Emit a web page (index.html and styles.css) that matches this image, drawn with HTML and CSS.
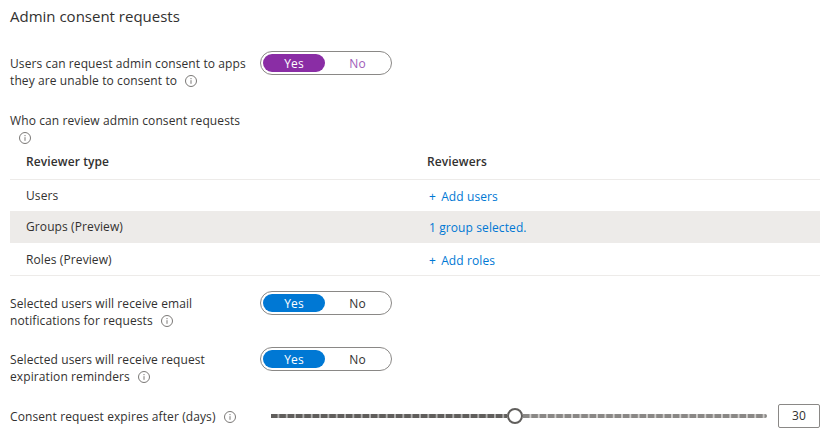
FILE: index.html
```html
<!DOCTYPE html>
<html lang="en">
<head>
<meta charset="utf-8">
<title>Admin consent requests</title>
<link rel="stylesheet" href="styles.css">
</head>
<body>
<main class="page">
  <h1 class="title">Admin consent requests</h1>

  <section class="setting first">
    <div class="label">Users can request admin consent to apps they are unable to consent to<svg class="info" viewBox="0 0 12 12"><circle cx="6" cy="6" r="5.5"/><path d="M6 5.2v3.6M6 3v1.2"/></svg></div>
    <div class="toggle purple"><span class="on">Yes</span><span class="off">No</span></div>
  </section>

  <div class="who">Who can review admin consent requests<br><svg class="info solo" viewBox="0 0 12 12"><circle cx="6" cy="6" r="5.5"/><path d="M6 5.2v3.6M6 3v1.2"/></svg></div>

  <div class="table">
    <div class="row head"><span class="c1">Reviewer type</span><span class="c2">Reviewers</span></div>
    <div class="row users"><span class="c1">Users</span><a class="c2 link"><span class="plus">+</span> Add users</a></div>
    <div class="row selected"><span class="c1">Groups (Preview)</span><a class="c2 link">1 group selected.</a></div>
    <div class="row last"><span class="c1">Roles (Preview)</span><a class="c2 link"><span class="plus">+</span> Add roles</a></div>
  </div>

  <section class="setting second">
    <div class="label">Selected users will receive email notifications for requests<svg class="info" viewBox="0 0 12 12"><circle cx="6" cy="6" r="5.5"/><path d="M6 5.2v3.6M6 3v1.2"/></svg></div>
    <div class="toggle"><span class="on">Yes</span><span class="off">No</span></div>
  </section>

  <section class="setting third">
    <div class="label">Selected users will receive request expiration reminders<svg class="info" viewBox="0 0 12 12"><circle cx="6" cy="6" r="5.5"/><path d="M6 5.2v3.6M6 3v1.2"/></svg></div>
    <div class="toggle"><span class="on">Yes</span><span class="off">No</span></div>
  </section>

  <section class="slider-row">
    <div class="slider-label">Consent request expires after (days)<svg class="info" viewBox="0 0 12 12"><circle cx="6" cy="6" r="5.5"/><path d="M6 5.2v3.6M6 3v1.2"/></svg></div>
    <div class="slider">
      <div class="track done"></div>
      <div class="thumb"></div>
      <div class="track rest"></div>
    </div>
    <div class="value">30</div>
  </section>
</main>
</body>
</html>
```
FILE: styles.css
```css
* { box-sizing: border-box; }
html, body { margin: 0; padding: 0; background: #fff; }
body {
  width: 839px;
  height: 440px;
  overflow: hidden;
  font-family: "Open Sans", "Noto Sans", sans-serif;
  font-size: 12px;
  line-height: 17px;
  letter-spacing: 0.1px;
  color: #323130;
}
.page { padding: 6px 19px 0 10px; }
.title { margin: 0; font-size: 15px; font-weight: 400; line-height: 20px; letter-spacing: 0; }

.setting { display: flex; align-items: flex-start; }
.setting.first { margin-top: 25px; }
.setting.second { margin-top: 15px; }
.setting.third { margin-top: 18px; }
.label { width: 250px; padding-top: 4px; }
.info { width: 12px; height: 12px; margin-left: 8px; vertical-align: -2px; fill: none; stroke: #7a7876; stroke-width: 1; }
.info.solo { margin-left: 9px; margin-top: 3px; display: block; }

.toggle {
  display: flex;
  width: 132px;
  height: 24px;
  padding: 2px;
  border: 1px solid #8a8886;
  border-radius: 12px;
  text-align: center;
  line-height: 19px;
}
.toggle span { width: 62px; height: 18px; border-radius: 9px; }
.toggle .on { background: #0078d4; color: #fff; }
.toggle .off { flex: 1; padding-left: 1px; }
.toggle.purple .on { background: #8a2da5; }
.toggle.purple .off { color: #a05cb8; }

.who { margin-top: 23px; }
.table { margin-top: 0; }
.row { display: flex; align-items: center; height: 32px; border-bottom: 1px solid transparent; }
.row.head { height: 36px; font-weight: 600; border-bottom-color: #edebe9; }
.row.users { height: 31px; }
.row.selected { background: #edebe9; }
.row.last { height: 33px; border-bottom-color: #edebe9; }
.c1 { width: 417px; padding-left: 16px; }
.link { color: #0078d4; margin-left: 2px; padding-top: 2px; }
.plus { margin-right: 2px; }

.slider-row { display: flex; align-items: center; margin-top: 19px; }
.slider-label { width: 261px; }
.slider { display: flex; align-items: center; width: 496px; height: 20px; }
.track { height: 4px; background-size: 8.33px 4px; background-repeat: repeat-x; }
.done { width: 236px; background-color: #b0afae; background-image: linear-gradient(90deg, #605e5c 6.3px, transparent 6.3px); }
.rest { flex: 1; background-color: #cfcdcb; background-image: linear-gradient(90deg, #8a8886 6.3px, transparent 6.3px); border-radius: 0 2px 2px 0; }
.thumb { flex: none; width: 16px; height: 16px; border: 2px solid #605e5c; border-radius: 50%; background: #fff; }
.value { width: 42px; height: 24px; margin-left: 11px; border: 1px solid #8a8886; border-radius: 2px; text-align: center; line-height: 22px; }
```
